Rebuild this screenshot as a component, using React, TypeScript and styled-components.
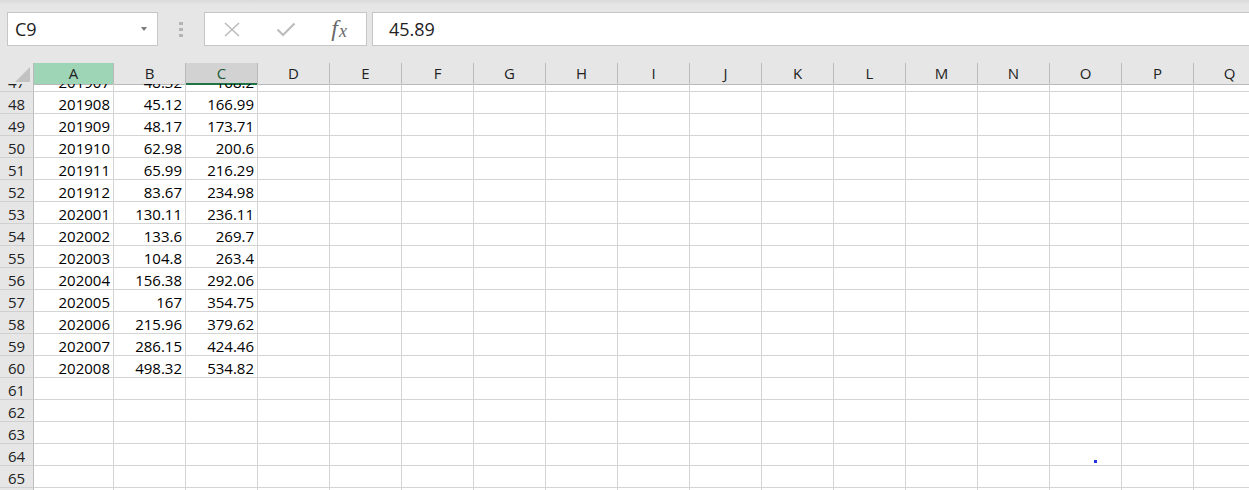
import React from "react";
import styled, { createGlobalStyle } from "styled-components";

const GlobalStyle = createGlobalStyle`
  body {
    margin: 0;
    background: #ffffff;
    font-family: "Open Sans", "Noto Sans", sans-serif;
  }
`;

const COLUMNS = ["A", "B", "C", "D", "E", "F", "G", "H", "I", "J", "K", "L", "M", "N", "O", "P", "Q"];
const GRID_TEMPLATE = `34px 80px repeat(${COLUMNS.length - 1}, 72px)`;

const rows: { n: number; cells: string[] }[] = [
  { n: 47, cells: ["201907", "48.32", "168.2"] },
  { n: 48, cells: ["201908", "45.12", "166.99"] },
  { n: 49, cells: ["201909", "48.17", "173.71"] },
  { n: 50, cells: ["201910", "62.98", "200.6"] },
  { n: 51, cells: ["201911", "65.99", "216.29"] },
  { n: 52, cells: ["201912", "83.67", "234.98"] },
  { n: 53, cells: ["202001", "130.11", "236.11"] },
  { n: 54, cells: ["202002", "133.6", "269.7"] },
  { n: 55, cells: ["202003", "104.8", "263.4"] },
  { n: 56, cells: ["202004", "156.38", "292.06"] },
  { n: 57, cells: ["202005", "167", "354.75"] },
  { n: 58, cells: ["202006", "215.96", "379.62"] },
  { n: 59, cells: ["202007", "286.15", "424.46"] },
  { n: 60, cells: ["202008", "498.32", "534.82"] },
  { n: 61, cells: [] },
  { n: 62, cells: [] },
  { n: 63, cells: [] },
  { n: 64, cells: [] },
  { n: 65, cells: [] },
  { n: 66, cells: [] },
];

const App = () => {
  return (
    <>
      <GlobalStyle />
      <Page>
        <Toolbar>
          <NameBox>
            <NameText>C9</NameText>
            <Caret />
          </NameBox>
          <Grip>
            <GripDot />
            <GripDot />
            <GripDot />
          </Grip>
          <FxBox>
            <FxSlot>
              <svg width="18" height="15" viewBox="0 0 18 15">
                <path d="M2 1 L16 14 M16 1 L2 14" stroke="#bcbcbc" strokeWidth="1.6" fill="none" />
              </svg>
            </FxSlot>
            <FxSlot>
              <svg width="20" height="15" viewBox="0 0 20 15">
                <path d="M1.5 7.5 L7 13 L18.5 1.5" stroke="#bcbcbc" strokeWidth="2.2" fill="none" />
              </svg>
            </FxSlot>
            <FxSlot>
              <FxLabel>
                f<sub>x</sub>
              </FxLabel>
            </FxSlot>
          </FxBox>
          <FormulaInput>45.89</FormulaInput>
        </Toolbar>

        <Sheet>
          <HeaderRow>
            <Corner>
              <CornerTriangle />
            </Corner>
            {COLUMNS.map((c) => (
              <ColHeader key={c} $state={c === "A" ? "active" : c === "C" ? "selected" : "none"}>
                {c}
              </ColHeader>
            ))}
          </HeaderRow>
          <Body>
            {rows.map((r, i) => (
              <Row key={r.n} $first={i === 0}>
                <RowHeader>{r.n}</RowHeader>
                {COLUMNS.map((c, ci) => (
                  <Cell key={c}>{r.cells[ci] ?? ""}</Cell>
                ))}
              </Row>
            ))}
            <StrayDot />
          </Body>
        </Sheet>
      </Page>
    </>
  );
};

const Page = styled.div`
  width: 1249px;
  height: 490px;
  overflow: hidden;
  display: flex;
  flex-direction: column;
`;

const Toolbar = styled.div`
  height: 63px;
  flex-shrink: 0;
  box-sizing: border-box;
  padding: 12px 0 0 7px;
  display: flex;
  align-items: flex-start;
  background: linear-gradient(#dadada 0, #e6e6e6 5px, #e6e6e6 100%);
`;

const Field = styled.div`
  height: 34px;
  box-sizing: border-box;
  background: #ffffff;
  border: 1px solid #c6c6c6;
  display: flex;
  align-items: center;
`;

const NameBox = styled(Field)`
  width: 151px;
  padding: 0 10px 0 7px;
  justify-content: space-between;
`;

const NameText = styled.span`
  font-size: 18px;
  color: #222222;
`;

const Caret = styled.span`
  width: 0;
  height: 0;
  border-left: 3.5px solid transparent;
  border-right: 3.5px solid transparent;
  border-top: 4px solid #7a7a7a;
`;

const Grip = styled.div`
  width: 46px;
  height: 34px;
  display: flex;
  flex-direction: column;
  align-items: center;
  justify-content: center;
  gap: 3px;
`;

const GripDot = styled.span`
  width: 4px;
  height: 3px;
  background: #b4b4b4;
`;

const FxBox = styled(Field)`
  width: 163px;
`;

const FxSlot = styled.div`
  width: 54px;
  height: 100%;
  display: flex;
  align-items: center;
  justify-content: center;
`;

const FxLabel = styled.span`
  font-family: "Liberation Serif", "DejaVu Serif", serif;
  font-style: italic;
  font-size: 24px;
  color: #6a6a6a;
  line-height: 1;
  margin-top: -3px;

  sub {
    font-size: 18px;
    vertical-align: -1px;
    margin-left: 1px;
  }
`;

const FormulaInput = styled(Field)`
  flex: 1;
  margin-left: 5px;
  border-right: none;
  padding-left: 16px;
  font-size: 18px;
  color: #222222;
`;

const Sheet = styled.div`
  flex: 1;
  display: flex;
  flex-direction: column;
  min-height: 0;
`;

const HeaderRow = styled.div`
  display: grid;
  grid-template-columns: ${GRID_TEMPLATE};
  height: 21px;
  background: #e6e6e6;
  flex-shrink: 0;
`;

const Corner = styled.div`
  position: relative;
  border-right: 1px solid #b9b9b9;
  border-bottom: 1px solid #b9b9b9;
`;

const CornerTriangle = styled.span`
  position: absolute;
  right: 3px;
  bottom: 2px;
  width: 0;
  height: 0;
  border-left: 15px solid transparent;
  border-bottom: 15px solid #c2c2c2;
`;

const ColHeader = styled.div<{ $state: "active" | "selected" | "none" }>`
  box-sizing: border-box;
  border-right: 1px solid #b9b9b9;
  border-bottom: ${(p) => (p.$state === "selected" ? "2px solid #217346" : "1px solid #b9b9b9")};
  background: ${(p) =>
    p.$state === "active" ? "#9fd5b7" : p.$state === "selected" ? "#d2d2d2" : "#e6e6e6"};
  color: ${(p) => (p.$state === "selected" ? "#1d5a37" : "#222222")};
  font-size: 15px;
  line-height: 20px;
  text-align: center;
`;

const Body = styled.div`
  position: relative;
  flex: 1;
  overflow: hidden;
`;

const Row = styled.div<{ $first: boolean }>`
  display: grid;
  grid-template-columns: ${GRID_TEMPLATE};
  height: 22px;
  margin-top: ${(p) => (p.$first ? "-14px" : "0")};
`;

const RowHeader = styled.div`
  box-sizing: border-box;
  background: #e6e6e6;
  border-right: 1px solid #bdbdbd;
  border-bottom: 1px solid #d0d0d0;
  color: #222222;
  font-size: 15px;
  line-height: 21px;
  padding-top: 2px;
  text-align: center;
  overflow: hidden;
`;

const Cell = styled.div`
  box-sizing: border-box;
  border-right: 1px solid #d4d4d4;
  border-bottom: 1px solid #d4d4d4;
  padding: 2px 3px 0 0;
  color: #000000;
  font-size: 15px;
  line-height: 21px;
  text-align: right;
  white-space: nowrap;
  overflow: hidden;
`;

const StrayDot = styled.span`
  position: absolute;
  left: 1094px;
  top: 376px;
  width: 3px;
  height: 3px;
  background: #2233dd;
`;

export default App;
